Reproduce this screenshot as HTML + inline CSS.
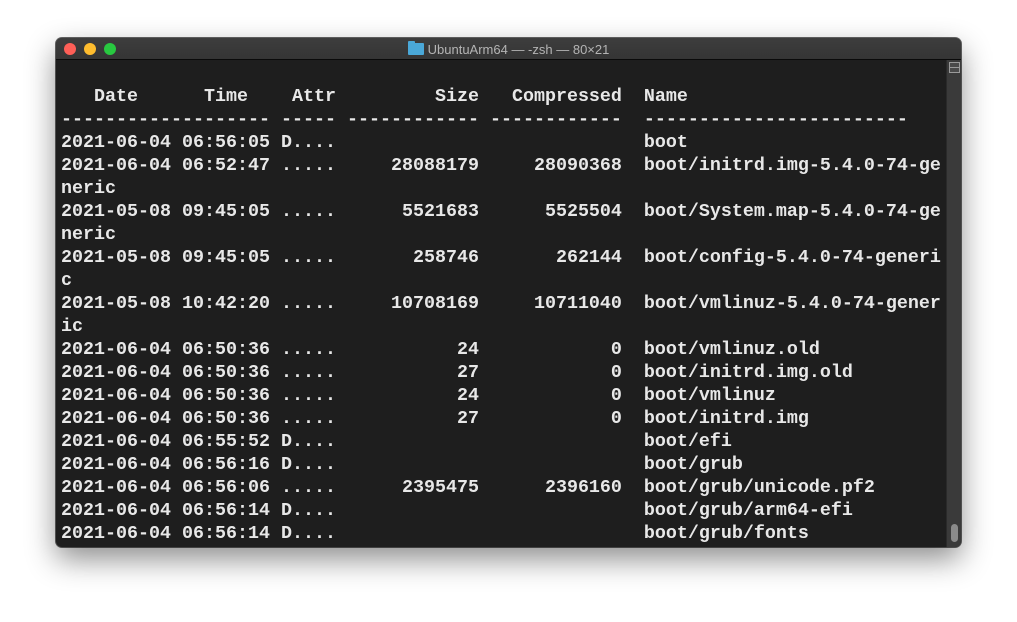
<!DOCTYPE html>
<html><head><meta charset="utf-8"><style>
html,body{margin:0;padding:0;background:#fff;width:1017px;height:622px;overflow:hidden}
.win{position:absolute;left:56px;top:38px;width:905px;height:509px;background:#1e1e1e;border-radius:6px;box-shadow:0 12px 30px rgba(0,0,0,.45),0 0 0 1px rgba(0,0,0,.6);overflow:hidden}
.tb{position:absolute;left:0;top:0;width:905px;height:21px;background:linear-gradient(#3d3d3d,#353535);border-bottom:1px solid #0a0a0a}
.dot{position:absolute;top:5px;width:12px;height:12px;border-radius:50%}
.title{position:absolute;left:0;right:0;top:4px;text-align:center;font:13px "Liberation Sans",sans-serif;color:#b4b4b4}
.folder{display:inline-block;width:16px;height:12px;background:#4aa8d8;border-radius:1px;vertical-align:-1px;margin-right:4px;position:relative}
.folder:before{content:"";position:absolute;left:0;top:-2px;width:7px;height:3px;background:#4aa8d8;border-radius:1px 1px 0 0}
.sb{position:absolute;left:890px;top:22px;width:15px;height:487px;background:#3a3a3a;border-left:1px solid #2a2a2a}
.sbb{position:absolute;left:2px;top:2px;width:11px;height:11px;border:1px solid #9a9a9a;box-sizing:border-box;background:#4a4a4a}
.sbb:after{content:"";position:absolute;left:0;right:0;top:4px;height:1px;background:#9a9a9a}
.thumb{position:absolute;left:4px;top:464px;width:7px;height:18px;border-radius:4px;background:#8a8a8a}
pre{position:absolute;left:5px;top:24px;margin:0;font:bold 18.33px/23px "Liberation Mono",monospace;color:#e8e8e8;letter-spacing:0}
</style></head><body>
<div class="win">
<div class="tb">
<div class="dot" style="left:8px;background:#fe5f57"></div>
<div class="dot" style="left:28px;background:#febc2e"></div>
<div class="dot" style="left:48px;background:#28c840"></div>
<div class="title"><span class="folder"></span>UbuntuArm64 — -zsh — 80×21</div>
</div>
<pre>

   Date      Time    Attr         Size   Compressed  Name
------------------- ----- ------------ ------------  ------------------------
2021-06-04 06:56:05 D....                            boot
2021-06-04 06:52:47 .....     28088179     28090368  boot/initrd.img-5.4.0-74-ge
neric
2021-05-08 09:45:05 .....      5521683      5525504  boot/System.map-5.4.0-74-ge
neric
2021-05-08 09:45:05 .....       258746       262144  boot/config-5.4.0-74-generi
c
2021-05-08 10:42:20 .....     10708169     10711040  boot/vmlinuz-5.4.0-74-gener
ic
2021-06-04 06:50:36 .....           24            0  boot/vmlinuz.old
2021-06-04 06:50:36 .....           27            0  boot/initrd.img.old
2021-06-04 06:50:36 .....           24            0  boot/vmlinuz
2021-06-04 06:50:36 .....           27            0  boot/initrd.img
2021-06-04 06:55:52 D....                            boot/efi
2021-06-04 06:56:16 D....                            boot/grub
2021-06-04 06:56:06 .....      2395475      2396160  boot/grub/unicode.pf2
2021-06-04 06:56:14 D....                            boot/grub/arm64-efi
2021-06-04 06:56:14 D....                            boot/grub/fonts</pre>
<div class="sb"><div class="sbb"></div><div class="thumb"></div></div>
</div>
</body></html>
